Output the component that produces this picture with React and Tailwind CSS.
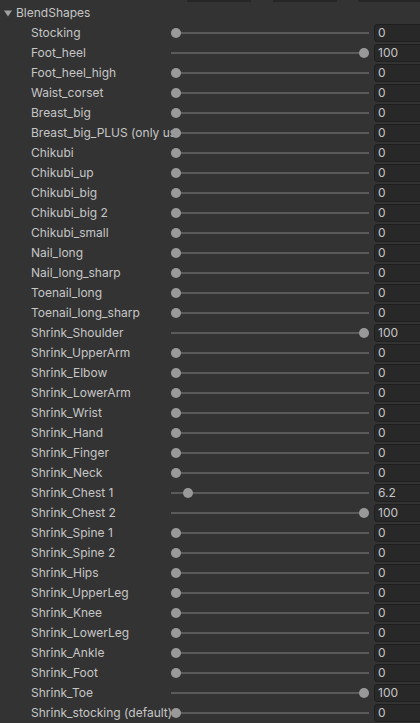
const shapes = [
  ['Stocking', 0], ['Foot_heel', 100], ['Foot_heel_high', 0], ['Waist_corset', 0],
  ['Breast_big', 0], ['Breast_big_PLUS (only used with Breast_big)', 0], ['Chikubi', 0],
  ['Chikubi_up', 0], ['Chikubi_big', 0], ['Chikubi_big 2', 0], ['Chikubi_small', 0],
  ['Nail_long', 0], ['Nail_long_sharp', 0], ['Toenail_long', 0], ['Toenail_long_sharp', 0],
  ['Shrink_Shoulder', 100], ['Shrink_UpperArm', 0], ['Shrink_Elbow', 0], ['Shrink_LowerArm', 0],
  ['Shrink_Wrist', 0], ['Shrink_Hand', 0], ['Shrink_Finger', 0], ['Shrink_Neck', 0],
  ['Shrink_Chest 1', 6.2], ['Shrink_Chest 2', 100], ['Shrink_Spine 1', 0], ['Shrink_Spine 2', 0],
  ['Shrink_Hips', 0], ['Shrink_UpperLeg', 0], ['Shrink_Knee', 0], ['Shrink_LowerLeg', 0],
  ['Shrink_Ankle', 0], ['Shrink_Foot', 0], ['Shrink_Toe', 100], ['Shrink_stocking (default)', 0],
];

const Row = ({ name, value }) => (
  <div className="flex items-center h-5">
    {/* label runs a few px under the slider knob, like Unity */}
    <div className="w-[144px] -mr-[4px] ml-[31px] whitespace-nowrap overflow-hidden text-[12px] text-[#c6c6c6]">{name}</div>
    <div className="relative z-10 w-[198px] h-5 shrink-0">
      <div className="absolute left-0 right-0 top-[9px] h-[2px] bg-[#5a5a5a]" />
      <div
        className="absolute top-[5px] w-[10px] h-[10px] rounded-full bg-[#999999]"
        style={{ left: `${value * 1.88}px` }}
      />
    </div>
    <div className="ml-[5px] h-[18px] flex-1 -mr-2 rounded-[3px] border border-[#1f1f1f] bg-[#282828] pl-[3px] text-[12px] leading-[16px] text-[#c6c6c6]">
      {value}
    </div>
  </div>
);

export default function App() {
  return (
    <div className="w-[420px] h-[723px] overflow-hidden bg-[#333333] font-['Inter',sans-serif]">
      <div className="flex h-[2px]">
        <div className="ml-[187px] w-[64px] bg-[#262626]" />
        <div className="ml-[22px] w-[64px] bg-[#262626]" />
        <div className="ml-[21px] flex-1 bg-[#262626]" />
      </div>
      <div className="flex items-center h-[21px] pl-[4px] text-[12px] text-[#c6c6c6]">
        <svg width="8" height="8" viewBox="0 0 8 8" className="mr-[4px]">
          <path d="M0 1.5 L8 1.5 L4 7.5 Z" fill="#a0a0a0" />
        </svg>
        BlendShapes
      </div>
      <div>
        {shapes.map(([n, v]) => (
          <Row key={n} name={n} value={v} />
        ))}
      </div>
    </div>
  );
}
